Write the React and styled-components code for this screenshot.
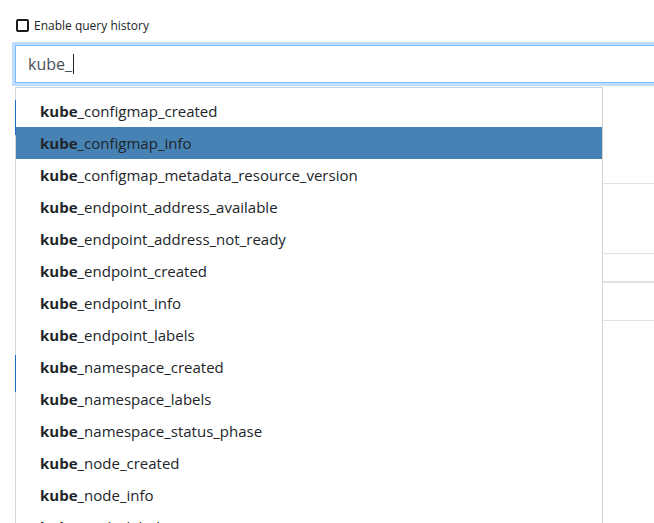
import { createGlobalStyle, styled } from 'styled-components';

const GlobalStyle = createGlobalStyle`
    html, body {
        margin: 0;
        padding: 0;
        background: #fff;
        overflow: hidden;
    }
    body {
        font-family: "Open Sans", "Noto Sans", sans-serif;
        color: #212529;
    }
`;

const Page = styled.div`
    width: 760px;
    padding: 14px 15px 0;
    box-sizing: border-box;
    height: 523px;
    overflow: hidden;
`;

const HistoryRow = styled.label`
    display: flex;
    align-items: center;
    gap: 5px;
    height: 22px;
    font-size: 12px;
    margin-left: 1px;
`;

const CheckBox = styled.span`
    width: 9px;
    height: 9px;
    border: 2px solid #1b1b1b;
    border-radius: 2px;
    box-sizing: content-box;
`;

const Input = styled.div`
    margin-top: 9px;
    height: 38px;
    box-sizing: border-box;
    border: 1px solid #80bdff;
    box-shadow: 0 0 0 3px rgba(0, 123, 255, 0.25);
    padding: 0 12px;
    display: flex;
    align-items: center;
    font-size: 16px;
    color: #495057;
`;

const Caret = styled.span`
    display: inline-block;
    width: 1px;
    height: 20px;
    background: #222;
    margin-left: 1px;
`;

const Content = styled.div`
    position: relative;
    display: grid;
    grid-template-columns: 1px 1fr;
    padding-top: 4px;
`;

const Rail = styled.div`
    display: flex;
    flex-direction: column;
`;

const RailPart = styled.div`
    background: ${(p) => (p.$active ? '#1c6dc9' : '#d6d6d6')};
`;

const Rows = styled.div`
    display: flex;
    flex-direction: column;
`;

const Row = styled.div`
    border-bottom: ${(p) => (p.$thick ? '2px solid #dfe3e8' : '1px solid #e2e2e2')};
`;

const Menu = styled.ul`
    position: absolute;
    top: 4px;
    left: 1px;
    width: 587px;
    margin: 0;
    padding: 7px 0 0;
    list-style: none;
    background: #fff;
    border-top: 1px solid #c9d3de;
    border-right: 1px solid #d4d4d4;
    box-sizing: border-box;
    height: 460px;
    overflow: hidden;
`;

const Item = styled.li`
    height: 32px;
    line-height: 32px;
    padding-left: 24px;
    font-size: 15px;
    white-space: nowrap;
    color: #212529;
    background: ${(p) => (p.$active ? '#4682b4' : 'transparent')};
`;

const Match = styled.b`
    font-weight: 700;
`;

const metrics = [
    'configmap_created',
    'configmap_info',
    'configmap_metadata_resource_version',
    'endpoint_address_available',
    'endpoint_address_not_ready',
    'endpoint_created',
    'endpoint_info',
    'endpoint_labels',
    'namespace_created',
    'namespace_labels',
    'namespace_status_phase',
    'node_created',
    'node_info',
    'node_labels',
];

export default function App() {
    return (
        <>
            <GlobalStyle />
            <Page>
                <HistoryRow>
                    <CheckBox />
                    Enable query history
                </HistoryRow>
                <Input>
                    kube_
                    <Caret />
                </Input>
                <Content>
                    <Rail>
                        <RailPart style={{ height: 13 }} />
                        <RailPart $active style={{ height: 35 }} />
                        <RailPart style={{ height: 220 }} />
                        <RailPart $active style={{ height: 37 }} />
                        <RailPart style={{ height: 140 }} />
                    </Rail>
                    <Rows>
                        <Row style={{ height: 96 }} />
                        <Row style={{ height: 69 }} />
                        <Row $thick style={{ height: 27 }} />
                        <Row style={{ height: 37 }} />
                    </Rows>
                    <Menu>
                        {metrics.map((m, i) => (
                            <Item key={m} $active={i === 1}>
                                <Match>kube</Match>_{m}
                            </Item>
                        ))}
                    </Menu>
                </Content>
            </Page>
        </>
    );
}
